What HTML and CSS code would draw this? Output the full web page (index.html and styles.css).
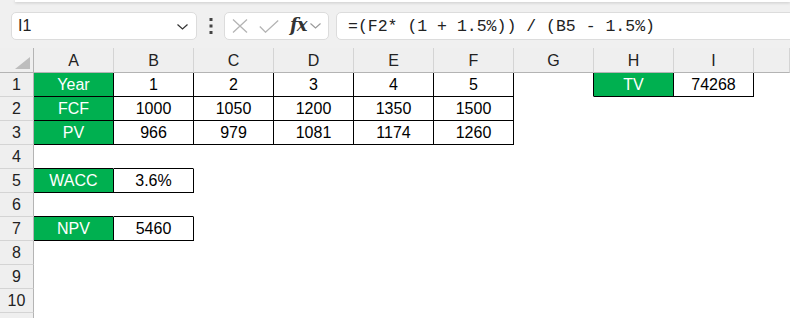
FILE: index.html
```html
<!DOCTYPE html>
<html>
<head>
  <title>DCF sheet</title>
  <meta charset="UTF-8">
  <link rel="stylesheet" href="styles.css">
</head>
<body>
  <div class="toolbar">
    <div class="ribbon-edge"></div>

    <!-- name box / fx / formula -->
    <div class="formula-bar">
      <div class="name-box">
        <span class="name-text">I1</span>
        <svg class="chev" width="11" height="6" viewBox="0 0 11 6"><path d="M0.5 0.5 L5.5 5 L10.5 0.5" fill="none" stroke="#333" stroke-width="1.2"/></svg>
      </div>
      <div class="grip">
        <svg width="4" height="16" viewBox="0 0 4 16"><rect x="0.5" y="0" width="3" height="3" fill="#444"/><rect x="0.5" y="6.5" width="3" height="3" fill="#444"/><rect x="0.5" y="13" width="3" height="3" fill="#444"/></svg>
      </div>
      <div class="fx-box">
        <svg class="ico-x" width="16" height="14" viewBox="0 0 16 14"><path d="M1 0.5 L15 13.5 M15 0.5 L1 13.5" stroke="#b4b4b4" stroke-width="1.3" fill="none"/></svg>
        <svg class="ico-ok" width="20" height="13" viewBox="0 0 20 13"><path d="M0.8 6.5 L6.5 12.2 L19.2 0.6" stroke="#b4b4b4" stroke-width="1.3" fill="none"/></svg>
        <span class="fx">fx</span>
        <svg class="chev-sm" width="11" height="6" viewBox="0 0 11 6"><path d="M0.5 0.5 L5.5 5 L10.5 0.5" fill="none" stroke="#999" stroke-width="1.1"/></svg>
      </div>
      <div class="formula">=(F2* (1 + 1.5%)) / (B5 - 1.5%)</div>
    </div>
  </div>

  <div class="sheet">
    <!-- column headers -->
    <div class="ch corner"><span class="tri"></span></div>
    <div class="ch">A</div><div class="ch">B</div><div class="ch">C</div><div class="ch">D</div><div class="ch">E</div>
    <div class="ch">F</div><div class="ch">G</div><div class="ch">H</div><div class="ch">I</div><div class="ch"></div>

    <!-- row 1 -->
    <div class="rh">1</div>
    <div class="c g br bb">Year</div><div class="c br bb">1</div><div class="c br bb">2</div><div class="c br bb">3</div>
    <div class="c br bb">4</div><div class="c br bb">5</div><div class="c br"></div>
    <div class="c g br bb">TV</div><div class="c br bb">74268</div><div class="c"></div>

    <!-- row 2 -->
    <div class="rh">2</div>
    <div class="c g br bb">FCF</div><div class="c br bb">1000</div><div class="c br bb">1050</div><div class="c br bb">1200</div>
    <div class="c br bb">1350</div><div class="c br bb">1500</div><div class="c"></div>
    <div class="c"></div><div class="c"></div><div class="c"></div>

    <!-- row 3 -->
    <div class="rh">3</div>
    <div class="c g br bb">PV</div><div class="c br bb">966</div><div class="c br bb">979</div><div class="c br bb">1081</div>
    <div class="c br bb">1174</div><div class="c br bb">1260</div><div class="c"></div>
    <div class="c"></div><div class="c"></div><div class="c"></div>

    <!-- row 4 -->
    <div class="rh">4</div>
    <div class="c bb"></div><div class="c bb"></div><div class="c"></div><div class="c"></div><div class="c"></div>
    <div class="c"></div><div class="c"></div><div class="c"></div><div class="c"></div><div class="c"></div>

    <!-- row 5 -->
    <div class="rh">5</div>
    <div class="c g br bb">WACC</div><div class="c br bb">3.6%</div><div class="c"></div><div class="c"></div><div class="c"></div>
    <div class="c"></div><div class="c"></div><div class="c"></div><div class="c"></div><div class="c"></div>

    <!-- row 6 -->
    <div class="rh">6</div>
    <div class="c bb"></div><div class="c bb"></div><div class="c"></div><div class="c"></div><div class="c"></div>
    <div class="c"></div><div class="c"></div><div class="c"></div><div class="c"></div><div class="c"></div>

    <!-- row 7 -->
    <div class="rh">7</div>
    <div class="c g br bb">NPV</div><div class="c br bb">5460</div><div class="c"></div><div class="c"></div><div class="c"></div>
    <div class="c"></div><div class="c"></div><div class="c"></div><div class="c"></div><div class="c"></div>

    <div class="rh">8</div><div class="blank"></div>
    <div class="rh">9</div><div class="blank"></div>
    <div class="rh">10</div><div class="blank"></div>
    <div class="rh"></div><div class="blank"></div>
  </div>
</body>
</html>
```

FILE: styles.css
```css
:root {
  --chrome-bg: #f0f0f0;
  --header-bg: #efefef;
  --header-line: #d4d4d4;
  --header-edge: #b4b4b4;
  --green: #00b050;
  --text: #000;
}
body {
  margin: 0;
  width: 790px;
  height: 318px;
  overflow: hidden;
  background: #fff;
  font-family: "Liberation Sans", Arial, sans-serif;
  color: var(--text);
}

/* --- top chrome --- */
.toolbar { background: var(--chrome-bg); padding-bottom: 8px; }
.ribbon-edge { height: 2px; margin-left: 15px; background: #fff; box-shadow: 0 1px 3px rgba(0, 0, 0, 0.18); }
.formula-bar { display: flex; height: 28px; margin-top: 10px; padding-left: 11px; }
.name-box { width: 186px; box-sizing: border-box; display: flex; align-items: center; justify-content: space-between; padding: 0 8px 0 6px; background: #fff; border: 1px solid #dcdcdc; border-radius: 5px; }
.name-text { font-size: 16px; color: #222; }
.chev { margin-top: 1px; }
.grip { width: 27px; display: flex; align-items: center; justify-content: center; }
.fx-box { width: 105px; box-sizing: border-box; display: flex; align-items: center; padding-left: 7px; background: #fff; border: 1px solid #dcdcdc; border-radius: 5px; }
.ico-x { margin-right: 11px; }
.ico-ok { margin-right: 11px; }
.fx { font-family: "DejaVu Serif", "Liberation Serif", serif; font-style: italic; font-weight: bold; font-size: 18px; color: #333; line-height: 1; margin-top: -3px; letter-spacing: -1px; }
.chev-sm { margin-left: 4px; }
.formula { flex: 1; margin-left: 7px; margin-right: -6px; display: flex; align-items: center; padding-left: 11px; background: #fff; border: 1px solid #dcdcdc; border-radius: 5px; font-family: "Liberation Mono", "Courier New", monospace; font-size: 16.5px; color: #222; white-space: pre; }

/* --- grid --- */
.sheet { display: grid; height: 270px; overflow: hidden; grid-template-columns: 34px repeat(9, 80px) 1fr; grid-template-rows: 25px; grid-auto-rows: 24px; font-size: 16px; }
.ch { background: var(--header-bg); border-right: 1px solid var(--header-line); border-bottom: 1px solid var(--header-edge); display: flex; align-items: center; justify-content: center; padding-top: 2px; box-sizing: border-box; color: #222; }
.ch:last-child { border-right: none; }
.corner { position: relative; border-right-color: var(--header-edge); }
.tri { position: absolute; right: 3px; bottom: 3px; width: 15px; height: 12px; background: #bdbdbd; clip-path: polygon(100% 0, 100% 100%, 0 100%); }
.rh { background: var(--header-bg); border-right: 1px solid var(--header-edge); border-bottom: 1px solid var(--header-line); display: flex; align-items: center; justify-content: center; box-sizing: border-box; color: #222; }
.c { display: flex; align-items: center; justify-content: center; box-sizing: border-box; border-right: 1px solid transparent; border-bottom: 1px solid transparent; }
.blank { grid-column: 2 / -1; }
.br { border-right-color: #000; }
.bb { border-bottom-color: #000; }
.g { background: var(--green); color: #fff; }
```
